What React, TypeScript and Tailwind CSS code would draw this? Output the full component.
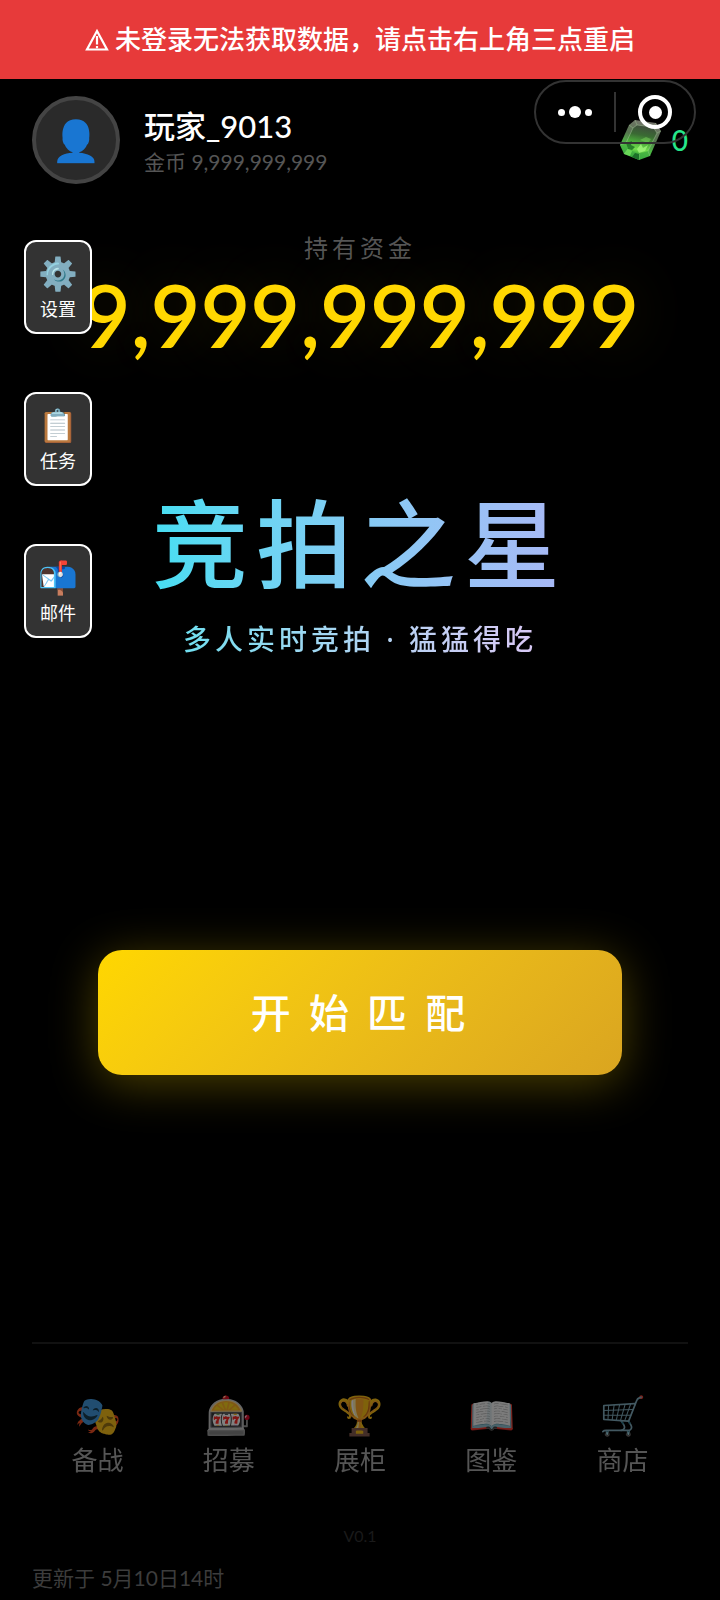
const sideItems = [
    { icon: "⚙️", label: "设置" },
    { icon: "📋", label: "任务" },
    { icon: "📬", label: "邮件" },
];

const navItems = [
    { icon: "🎭", label: "备战" },
    { icon: "🎰", label: "招募" },
    { icon: "🏆", label: "展柜" },
    { icon: "📖", label: "图鉴" },
    { icon: "🛒", label: "商店" },
];

function Warning() {
    return (
        <svg viewBox="0 0 24 24" className="size-6" fill="none" stroke="currentColor" strokeWidth="2.2" aria-hidden="true">
            <path d="M12 3 22 21.5H2Z" />
            <path d="M12 8v8.5M12 18v2.2" />
        </svg>
    );
}

function Gem() {
    return (
        <svg viewBox="0 0 42 42" className="size-[42px]" aria-hidden="true">
            <defs>
                <linearGradient id="gem-body" x1="0.65" y1="0" x2="0.35" y2="1">
                    <stop offset="0" stopColor="#77756e" />
                    <stop offset="0.4" stopColor="#56744f" />
                    <stop offset="0.7" stopColor="#4cb843" />
                    <stop offset="1" stopColor="#35a83e" />
                </linearGradient>
                <linearGradient id="gem-table" x1="0.6" y1="0" x2="0.4" y2="1">
                    <stop offset="0" stopColor="#3f4a3d" />
                    <stop offset="0.35" stopColor="#3a6a33" />
                    <stop offset="0.6" stopColor="#4aa83a" />
                    <stop offset="0.85" stopColor="#74e04f" />
                    <stop offset="1" stopColor="#3fae3a" />
                </linearGradient>
            </defs>
            <path d="M15 1 36 4 41 12 30 37 19 41 4 35 0 26 9 6Z" fill="url(#gem-body)" />
            <path d="M17 6 33 8 37 14 28 32 19 35 8 30 6 24 13 9Z" fill="url(#gem-table)" />
            <path d="M17 6 33 8 37 14 28 32M17 6 13 9 6 24" fill="none" stroke="#b3d3a6" strokeWidth="0.7" opacity="0.6" />
            <path d="M15 1 17 6M36 4 33 8M41 12 37 14M30 37 28 32M19 41 19 35M4 35 8 30M0 26 6 24M9 6 13 9" stroke="#a9d69c" strokeWidth="0.6" opacity="0.6" />
            <path d="M6 24 8 30 12 31 15 28 11 26 12 22Z" fill="#176b22" opacity="0.8" />
            <path d="M17 30 21 25 23 29 28 26 25 32 19 34Z" fill="#a2f57c" opacity="0.8" />
            <path d="M20 21 26 18 31 20 28 24Z" fill="#8be766" opacity="0.4" />
            <path d="M4 35 8 30 12 32 10 37Z" fill="#7be860" opacity="0.7" />
            <path d="M12 38 15 34 19 35 19 41Z" fill="#1c7029" />
        </svg>
    );
}

function Capsule() {
    return (
        <div className="absolute top-20 right-6 flex h-16 w-[162px] items-center rounded-full border-2 border-[#333]">
            <button type="button" aria-label="更多" className="flex h-full flex-1 items-center justify-center gap-1">
                <span className="size-[7px] rounded-full bg-white" />
                <span className="size-3 rounded-full bg-white" />
                <span className="size-[7px] rounded-full bg-white" />
            </button>
            <span className="h-10 w-0.5 bg-[#333]" />
            <button type="button" aria-label="关闭" className="flex h-full flex-1 items-center justify-center">
                <span className="flex size-[34px] items-center justify-center rounded-full border-4 border-white">
                    <span className="size-[13px] rounded-full bg-white" />
                </span>
            </button>
        </div>
    );
}

export default function App() {
    return (
        <div className="relative flex min-h-screen flex-col bg-black font-[Lato,'Noto_Sans_CJK_SC',sans-serif] text-white">
            <div role="alert" className="flex h-[79px] items-center justify-center gap-1.5 bg-[#e73a3a] text-[26px] font-medium">
                <Warning />
                <p>未登录无法获取数据，请点击右上角三点重启</p>
            </div>

            <header className="flex items-center justify-between pt-[17px] pr-8 pl-8">
                <div className="flex items-center gap-6">
                    <div className="flex size-22 items-center justify-center rounded-full border-4 border-[#444] bg-[#2a2a2a] text-[40px]">
                        👤
                    </div>
                    <div className="pt-1">
                        <p className="text-[31px] leading-10 font-medium">玩家_9013</p>
                        <p className="text-[21px] leading-8 text-[#555]">金币 9,999,999,999</p>
                    </div>
                </div>
                <div className="flex items-center gap-2.5">
                    <Gem />
                    <span className="text-[28px] font-medium text-[#26e68a]">0</span>
                </div>
            </header>
            <Capsule />

            <section className="mt-12 text-center">
                <p className="text-2xl leading-8 tracking-[4px] text-[#555]">持有资金</p>
                <p className="text-[86px] leading-[102px] font-semibold text-[#ffd700] [text-shadow:0_0_60px_rgba(255,215,0,0.15)]">
                    9,999,999,999
                </p>
            </section>

            <aside className="absolute top-60 left-6 flex flex-col gap-[58px]">
                {sideItems.map((item) => (
                    <button
                        key={item.label}
                        type="button"
                        className="flex h-[94px] w-[68px] flex-col items-center justify-center rounded-xl border-2 border-white bg-[#333]"
                    >
                        <span className="text-[32px] leading-11">{item.icon}</span>
                        <span className="text-lg leading-7">{item.label}</span>
                    </button>
                ))}
            </aside>

            <section className="mt-[117px] flex flex-col items-center">
                <h1 className="bg-linear-to-r from-[#45def2] to-[#a9b8f6] bg-clip-text text-[96px] leading-[120px] font-medium tracking-[8px] text-transparent">
                    竞拍之星
                </h1>
                <p className="mt-4 bg-linear-to-r from-[#6fdff0] to-[#d9c8f5] bg-clip-text font-['Noto_Sans','Noto_Sans_CJK_SC',sans-serif] text-[28px] leading-10 font-medium tracking-[4px] text-transparent">
                    多人实时竞拍 · 猛猛得吃
                </p>
            </section>

            <div className="flex flex-1 items-center px-[98px] pt-6">
                <button
                    type="button"
                    className="h-[125px] w-full rounded-3xl bg-linear-135 from-[#ffd700] to-[#daa520] text-[40px] font-medium tracking-[4px] shadow-[0_8px_48px_rgba(255,215,0,0.3)]"
                >
                    开 始 匹 配
                </button>
            </div>

            <nav className="mx-8 grid grid-cols-5 border-t-2 border-[#111] pt-11">
                {navItems.map((item) => (
                    <button key={item.label} type="button" className="flex flex-col items-center opacity-50">
                        <span className="text-[38px] leading-13">{item.icon}</span>
                        <span className="text-[26px] leading-10 text-[#aaa]">{item.label}</span>
                    </button>
                ))}
            </nav>
            <footer className="px-8 pt-10 pb-1">
                <p className="text-center text-base leading-8 text-[#1a1a1a]">V0.1</p>
                <p className="mt-2 text-[21px] leading-9 text-[#3c3c3c]">更新于 5月10日14时</p>
            </footer>
        </div>
    );
}
